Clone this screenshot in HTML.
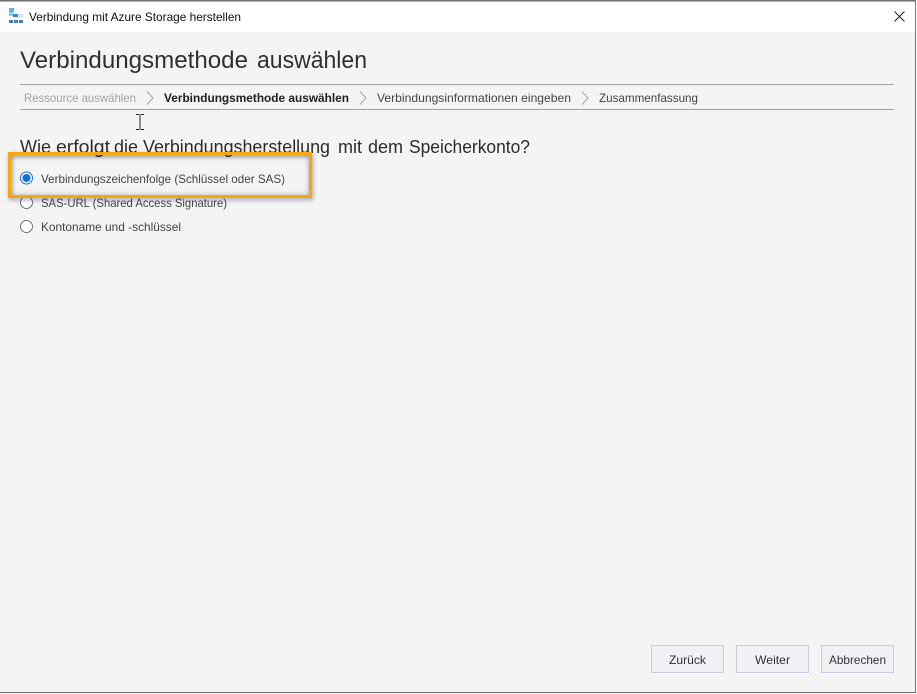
<!DOCTYPE html>
<html lang="de">
<head>
<meta charset="utf-8">
<title>Verbindung mit Azure Storage herstellen</title>
<style>
html,body{margin:0;padding:0;background:#fff;width:917px;height:694px;overflow:hidden}
svg{display:block}
text{font-family:"Liberation Sans",sans-serif}
</style>
</head>
<body>
<svg width="917" height="694" viewBox="0 0 917 694" xmlns="http://www.w3.org/2000/svg">
<defs>
<filter id="s" x="-10%" y="-30%" width="120%" height="160%"><feDropShadow dx="1" dy="2" stdDeviation="2" flood-color="#000" flood-opacity=".38"/></filter>
<filter id="b" x="-10%" y="-30%" width="120%" height="160%"><feGaussianBlur stdDeviation="2"/></filter>
<clipPath id="inner"><rect x="11" y="155" width="298" height="40"/></clipPath>
</defs>
<rect width="917" height="694" fill="#fff"/>
<rect x="0" y="32" width="915" height="660" fill="#f4f4f4"/>
<rect x="0" y="0" width="916" height="1.5" fill="#6e6e6e"/>
<rect x="915" y="0" width="1" height="693" fill="#7a7a7a"/>
<rect x="0" y="692" width="916" height="1" fill="#6e6e6e"/>

<!-- app icon -->
<g>
<rect x="9" y="8" width="5" height="4" fill="#5cb0ee"/>
<rect x="9" y="12" width="4" height="4" fill="#8fcaf4"/>
<rect x="13" y="14" width="5" height="3" fill="#2e8fe6"/>
<rect x="18" y="14" width="5" height="4" fill="#dfe3e8"/>
<rect x="9" y="20" width="4" height="3" fill="#3f7fbd"/>
<rect x="14" y="20" width="4" height="3" fill="#3f7fbd"/>
<rect x="19" y="20" width="4" height="3" fill="#3f7fbd"/>
</g>
<text x="29" y="21" font-size="12" fill="#111" textLength="212" lengthAdjust="spacingAndGlyphs">Verbindung mit Azure Storage herstellen</text>
<path d="M894.500 11.500L904.500 21.500M904.500 11.500L894.500 21.500" stroke="#222" stroke-width="1" fill="none"/>

<g font-size="24" fill="#303030">
<text x="20" y="68" textLength="228" lengthAdjust="spacingAndGlyphs">Verbindungsmethode</text>
<text x="257" y="68" textLength="110" lengthAdjust="spacingAndGlyphs">auswählen</text>
</g>
<rect x="20" y="84" width="874" height="1" fill="#a3a3a3"/>
<rect x="20" y="109" width="874" height="1" fill="#a3a3a3"/>

<text x="24" y="102" font-size="12" fill="#a2a2a2" textLength="112" lengthAdjust="spacingAndGlyphs">Ressource auswählen</text>
<path d="M147 91.500L153 98L147 104.500" stroke="#a8a8a8" fill="none"/>
<text x="164" y="102" font-size="12" font-weight="bold" fill="#222" textLength="185" lengthAdjust="spacingAndGlyphs">Verbindungsmethode auswählen</text>
<path d="M360 91.500L366 98L360 104.500" stroke="#a8a8a8" fill="none"/>
<text x="377" y="102" font-size="12" fill="#444" textLength="194" lengthAdjust="spacingAndGlyphs">Verbindungsinformationen eingeben</text>
<path d="M582 91.500L588 98L582 104.500" stroke="#a8a8a8" fill="none"/>
<text x="599" y="102" font-size="12" fill="#444" textLength="99" lengthAdjust="spacingAndGlyphs">Zusammenfassung</text>

<!-- text cursor -->
<path d="M136 114.500H139.500M140.500 114.500H144M140 115V129M136 129.500H139.500M140.500 129.500H144" stroke="#222" fill="none"/>

<g font-size="18" fill="#2c2c2c">
<text x="20" y="153" textLength="31" lengthAdjust="spacingAndGlyphs">Wie</text>
<text x="56" y="153" textLength="54" lengthAdjust="spacingAndGlyphs">erfolgt</text>
<text x="114" y="153" textLength="24" lengthAdjust="spacingAndGlyphs">die</text>
<text x="143" y="153" textLength="187" lengthAdjust="spacingAndGlyphs">Verbindungsherstellung</text>
<text x="338" y="153" textLength="24" lengthAdjust="spacingAndGlyphs">mit</text>
<text x="368" y="153" textLength="35" lengthAdjust="spacingAndGlyphs">dem</text>
<text x="409" y="153" textLength="121" lengthAdjust="spacingAndGlyphs">Speicherkonto?</text>
</g>

<!-- radios below the highlight -->
<circle cx="26.500" cy="202.500" r="6" fill="#fff" stroke="#707070"/>
<text x="41" y="207" font-size="12" fill="#444" textLength="186" lengthAdjust="spacingAndGlyphs">SAS-URL (Shared Access Signature)</text>
<circle cx="26.500" cy="226.500" r="6" fill="#fff" stroke="#707070"/>
<text x="41" y="231" font-size="12" fill="#444" textLength="140" lengthAdjust="spacingAndGlyphs">Kontoname und -schlüssel</text>

<!-- highlight box -->
<g clip-path="url(#inner)">
<rect x="11" y="155" width="298" height="40" fill="none" stroke="#000" stroke-opacity=".22" stroke-width="2" filter="url(#b)"/>
</g>
<rect x="9.500" y="153.500" width="301" height="43" fill="none" stroke="#f5a70a" stroke-width="3" filter="url(#s)"/>

<circle cx="26.500" cy="178" r="6" fill="#fff" stroke="#0f6fe0"/>
<circle cx="26.500" cy="178" r="4" fill="#0f6fe0"/>
<text x="41" y="183" font-size="12" fill="#444" textLength="244" lengthAdjust="spacingAndGlyphs">Verbindungszeichenfolge (Schlüssel oder SAS)</text>

<!-- buttons -->
<rect x="651.500" y="645.500" width="72" height="27" fill="#f0f0f5" stroke="#cbcbdd"/>
<text x="669" y="664" font-size="12" fill="#333" textLength="37" lengthAdjust="spacingAndGlyphs">Zurück</text>
<rect x="736.500" y="645.500" width="72" height="27" fill="#f0f0f5" stroke="#cbcbdd"/>
<text x="755" y="664" font-size="12" fill="#333" textLength="35" lengthAdjust="spacingAndGlyphs">Weiter</text>
<rect x="821.500" y="645.500" width="72" height="27" fill="#f0f0f5" stroke="#cbcbdd"/>
<text x="829" y="664" font-size="12" fill="#333" textLength="57" lengthAdjust="spacingAndGlyphs">Abbrechen</text>
</svg>
</body>
</html>
